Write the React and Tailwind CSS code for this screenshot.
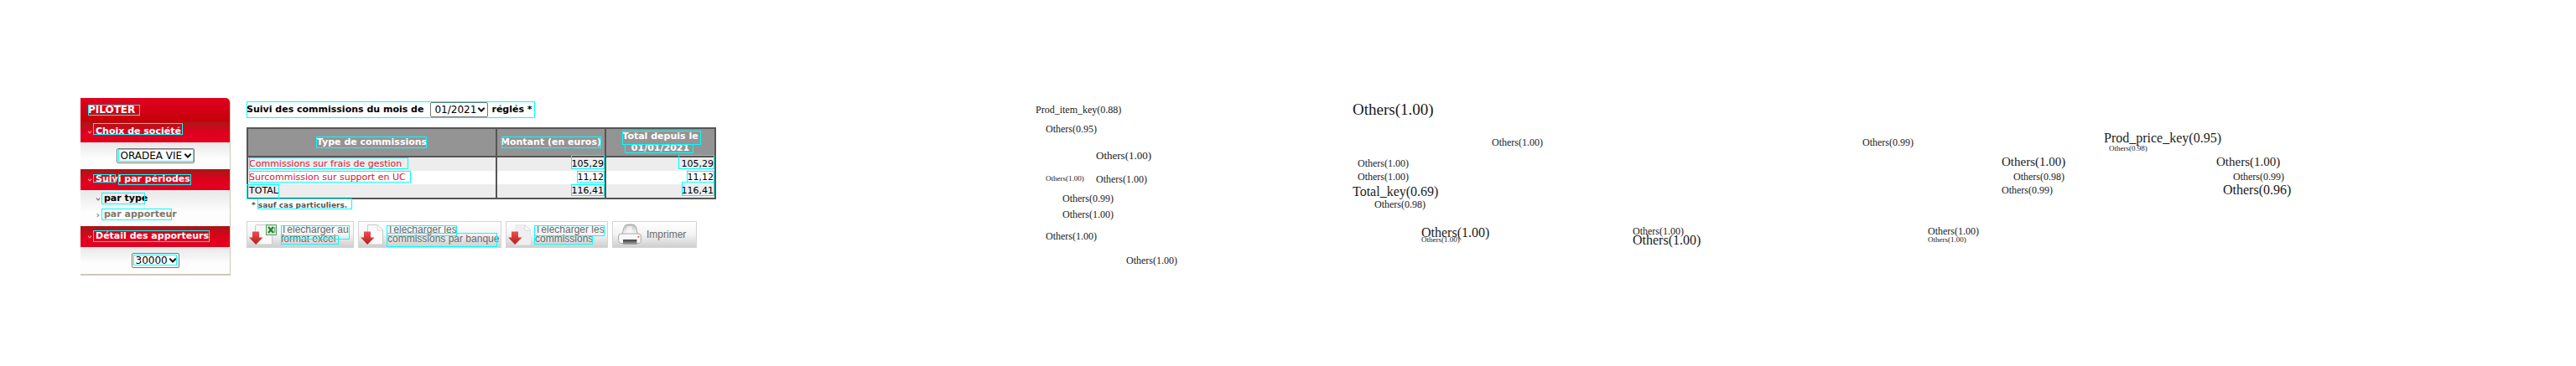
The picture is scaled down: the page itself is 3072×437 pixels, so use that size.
const labels = [
  ["Prod_item_key(0.88)", 1235, 131, "text-[12px]"],
  ["Others(0.95)", 1247, 154, "text-[12px]"],
  ["Others(1.00)", 1307, 185, "text-[13px]"],
  ["Others(1.00)", 1247, 213, "text-[9px]"],
  ["Others(1.00)", 1307, 214, "text-[12px]"],
  ["Others(0.99)", 1267, 237, "text-[12px]"],
  ["Others(1.00)", 1267, 256, "text-[12px]"],
  ["Others(1.00)", 1247, 282, "text-[12px]"],
  ["Others(1.00)", 1343, 311, "text-[12px]"],
  ["Others(1.00)", 1613, 130, "text-[19px]"],
  ["Others(1.00)", 1619, 195, "text-[12px]"],
  ["Others(1.00)", 1619, 211, "text-[12px]"],
  ["Total_key(0.69)", 1613, 229, "text-[16px]"],
  ["Others(0.98)", 1639, 244, "text-[12px]"],
  ["Others(1.00)", 1695, 278, "text-[16px]"],
  ["Others(1.00)", 1695, 286, "text-[9px]"],
  ["Others(1.00)", 1779, 170, "text-[12px]"],
  ["Others(1.00)", 1947, 276, "text-[12px]"],
  ["Others(1.00)", 1947, 287, "text-[16px]"],
  ["Others(0.99)", 2221, 170, "text-[12px]"],
  ["Prod_price_key(0.95)", 2509, 165, "text-[16px]"],
  ["Others(0.98)", 2515, 177, "text-[9px]"],
  ["Others(1.00)", 2387, 193, "text-[15px]"],
  ["Others(0.98)", 2401, 211, "text-[12px]"],
  ["Others(0.99)", 2387, 227, "text-[12px]"],
  ["Others(1.00)", 2299, 276, "text-[12px]"],
  ["Others(1.00)", 2299, 286, "text-[9px]"],
  ["Others(1.00)", 2643, 193, "text-[15px]"],
  ["Others(0.99)", 2663, 211, "text-[12px]"],
  ["Others(0.96)", 2651, 227, "text-[16px]"],
];

// Detected text regions: left, top, width, height
const boxes = [
  [105, 125, 62, 13], [111, 147, 107, 14], [141, 178, 90, 15], [111, 208, 27, 10],
  [141, 208, 87, 13], [121, 230, 52, 14], [121, 249, 84, 14], [111, 275, 139, 14],
  [159, 304, 52, 13], [294, 121, 344, 20], [377, 163, 132, 14], [297, 188, 190, 14],
  [297, 204, 193, 14], [294, 220, 39, 18], [307, 237, 113, 13], [598, 163, 119, 14],
  [742, 156, 94, 17], [745, 172, 82, 11], [681, 185, 40, 17], [688, 204, 33, 14],
  [681, 220, 40, 14], [809, 185, 43, 17], [819, 204, 33, 14], [813, 217, 39, 17],
  [335, 269, 82, 17], [335, 281, 69, 11], [461, 269, 84, 13], [461, 278, 132, 17],
  [637, 269, 84, 13], [637, 281, 70, 11],
];

function Annotations() {
  return (
    <div className="pointer-events-none absolute inset-0">
      {boxes.map(([left, top, width, height], i) => (
        <div key={i} className="absolute border border-[#00ffff]" style={{ left, top, width, height }} />
      ))}
      {labels.map(([text, left, top, size], i) => (
        <span
          key={i}
          className={`absolute -translate-y-1/2 font-["Liberation_Serif",serif] leading-none whitespace-nowrap text-[#1a1a1a] ${size}`}
          style={{ left, top }}
        >
          {text}
        </span>
      ))}
    </div>
  );
}

function Chevron({ right = false, className = "" }) {
  return (
    <svg viewBox="0 0 6 6" className={`size-[6px] shrink-0 ${className}`} fill="none" stroke="currentColor" strokeWidth="1.1">
      <path d={right ? "M1.7 1l2.3 2-2.3 2" : "M1 1.7l2 2.3 2-2.3"} />
    </svg>
  );
}

function Select({ label, value, className }) {
  return (
    <span className={`relative inline-flex ${className}`}>
      <select
        aria-label={label}
        defaultValue={value}
        className="h-full w-full appearance-none rounded-[2px] border border-[#767676] bg-white pl-1 text-[12px] leading-none text-black"
      >
        <option>{value}</option>
      </select>
      <svg viewBox="0 0 10 7" className="absolute top-1/2 right-[3px] h-[7px] w-[10px] -translate-y-1/2" fill="none" stroke="#111" strokeWidth="2">
        <path d="M1.3 1.3L5 5l3.7-3.7" />
      </svg>
    </span>
  );
}

function MenuTitle({ children }) {
  return (
    <h2 className="flex h-[25px] items-center gap-1 bg-linear-to-b from-[#a81414] via-[#d4041c] via-40% to-[#e2001f] to-60% pl-2 text-[11px] font-bold text-white">
      <Chevron className="text-[#f5a0a0]" />
      {children}
    </h2>
  );
}

const panel = "bg-linear-to-b from-[#e8e8e8] to-[#fdfdfd] to-60%";

function Sidebar() {
  return (
    <nav className="w-[179px] shrink-0 rounded-tr-[6px] border-r border-b-2 border-[#cdc9bb]">
      <h1 className="flex h-7 items-center rounded-tr-[5px] bg-linear-to-b from-[#e2001f] to-[#c40008] pl-[9px] text-[12px] font-bold text-white">
        PILOTER
      </h1>
      <MenuTitle>Choix de société</MenuTitle>
      <div className={`flex h-8 items-center justify-center ${panel}`}>
        <Select label="Société" value="ORADEA VIE" className="h-[18px] w-[93px]" />
      </div>
      <MenuTitle>Suivi par périodes</MenuTitle>
      <ul className={`h-[43px] pt-[1px] pl-[18px] text-[11px] font-bold ${panel}`}>
        <li>
          <a href="#type" className="flex h-[19px] items-center gap-1 text-black"><Chevron className="text-[#666]" />par type</a>
        </li>
        <li>
          <a href="#apporteur" className="flex h-[19px] items-center gap-1 text-[#7d7867]"><Chevron right className="text-[#999]" />par apporteur</a>
        </li>
      </ul>
      <MenuTitle>Détail des apporteurs</MenuTitle>
      <div className={`flex h-8 items-center justify-center ${panel}`}>
        <Select label="Apporteur" value="30000" className="h-[18px] w-[57px]" />
      </div>
    </nav>
  );
}

function DownloadIcon({ excel = false, faint = false }) {
  return (
    <svg viewBox={excel ? "0 0 34 26" : "0 0 28 26"} className={`h-[26px] shrink-0 ${excel ? "w-[34px]" : "w-[28px]"}`}>
      <defs>
        <linearGradient id="arrow" x1="0" y1="0" x2="0" y2="1">
          <stop offset="0" stopColor="#ec5050" />
          <stop offset="1" stopColor="#b81c1c" />
        </linearGradient>
      </defs>
      {excel ? (
        <rect x="7.500" y="1.500" width="20" height="23.500" rx="1" fill="#f8f8f8" stroke="#c9c9c9" />
      ) : (
        <>
          <path d="M8.500 1.500H20l6.500 6.500v17h-18z" fill={faint ? "#efefef" : "#fafafa"} stroke={faint ? "#ececec" : "#c9c9c9"} />
          <path d="M20 1.500V8h6.500z" fill="#fff" stroke="#cfcfcf" strokeWidth=".8" />
        </>
      )}
      <path d="M4 9.500h8v7h4.500L8.200 25 0 16.500h4z" fill="url(#arrow)" />
      {excel && (
        <g>
          <rect x="20.500" y="1.500" width="12" height="12" fill="#dcecd9" stroke="#5f9a63" />
          <path d="M23 4l6 7M29 4l-6 7" stroke="#23803a" strokeWidth="2.200" />
          <path d="M30.500 4v7" stroke="#7fb583" strokeWidth="1.500" />
        </g>
      )}
    </svg>
  );
}

function PrinterIcon() {
  return (
    <svg viewBox="0 0 28 26" className="h-[26px] w-[28px] shrink-0">
      <defs>
        <linearGradient id="paper" x1="0" y1="0" x2="0" y2="1">
          <stop offset="0" stopColor="#bdbdbd" />
          <stop offset="1" stopColor="#fff" />
        </linearGradient>
        <linearGradient id="slot" x1="0" y1="0" x2="0" y2="1">
          <stop offset="0" stopColor="#3c3c3c" />
          <stop offset="1" stopColor="#aaa" />
        </linearGradient>
      </defs>
      <path d="M5 13L7 5Q8 1 12 1h5q3.500 0 4.500 3l2 9z" fill="url(#paper)" stroke="#a8a8a8" />
      <path d="M9.500 12L11 3h5.500l1.500 9z" fill="#fff" opacity=".6" />
      <rect x=".7" y="12" width="26.600" height="11.500" rx="3" fill="#f8f8f8" stroke="#a8a8a8" />
      <rect x="6" y="19" width="16.500" height="6" fill="url(#slot)" />
      <circle cx="24.500" cy="15.800" r="1" fill="#e05050" />
    </svg>
  );
}

function ActionButton({ icon, children, className }) {
  return (
    <button
      type="button"
      className={`flex h-8 items-center border border-[#d4d4d4] bg-linear-to-b from-white via-[#f3f3f3] to-[#cfcfcf] text-left font-["Liberation_Sans",sans-serif] text-[12px] leading-[11px] whitespace-nowrap text-[#6a6a6a] ${className}`}
    >
      {icon}
      <span>{children}</span>
    </button>
  );
}

const rows = [
  ["Commissions sur frais de gestion", "105,29", "105,29"],
  ["Surcommission sur support en UC", "11,12", "11,12"],
  ["TOTAL", "116,41", "116,41"],
];

const cell = "border-x-2 border-[#555] px-[1px] py-0";

function CommissionTable() {
  return (
    <table className="mt-3 w-[560px] border-collapse border-2 border-[#555] text-[11px] leading-4">
      <thead>
        <tr className="h-[34px] border-b-2 border-[#555] bg-[#949494] leading-[14px] text-white">
          <th scope="col" className={cell}>Type de commissions</th>
          <th scope="col" className={`w-[130px] ${cell}`}>Montant (en euros)</th>
          <th scope="col" className={`w-[131px] ${cell}`}>Total depuis le<br />01/01/2021</th>
        </tr>
      </thead>
      <tbody>
        {rows.map(([name, amount, total]) => (
          <tr key={name} className="h-4 odd:bg-[#ededed] even:bg-white">
            <td className={cell}>
              {name === "TOTAL" ? name : <a href="#detail" className="text-[#d5173a]">{name}</a>}
            </td>
            <td className={`text-right ${cell}`}>{amount}</td>
            <td className={`text-right ${cell}`}>{total}</td>
          </tr>
        ))}
      </tbody>
    </table>
  );
}

export default function App() {
  return (
    <div className='relative min-h-screen bg-white pt-[117px] pl-24 font-["DejaVu_Sans",Verdana,sans-serif] text-black'>
      <div className="flex items-start gap-[19px]">
        <Sidebar />
        <main className="pt-[5px]">
          <div className="flex h-[18px] items-center gap-1 text-[11px] font-bold">
            <span className="pr-1">Suivi des commissions du mois de</span>
            <Select label="Mois" value="01/2021" className="h-[18px] w-[69px] font-normal" />
            <span>réglés *</span>
          </div>
          <CommissionTable />
          <p className="pl-[6px] text-[9px] leading-[14px] font-bold text-[#555]">* sauf cas particuliers.</p>
          <div className="mt-3 flex gap-[5px]">
            <ActionButton icon={<DownloadIcon excel />} className="w-[128px] gap-1 pl-[2px]">Télécharger au<br />format excel</ActionButton>
            <ActionButton icon={<DownloadIcon />} className="w-[171px] gap-1 pl-[2px]">Télécharger les<br />commissions par banque</ActionButton>
            <ActionButton icon={<DownloadIcon faint />} className="w-[122px] gap-1 pl-[2px]">Télécharger les<br />commissions</ActionButton>
            <ActionButton icon={<PrinterIcon />} className="w-[101px] gap-[6px] pl-[6px]">Imprimer</ActionButton>
          </div>
        </main>
      </div>
      <Annotations />
    </div>
  );
}
